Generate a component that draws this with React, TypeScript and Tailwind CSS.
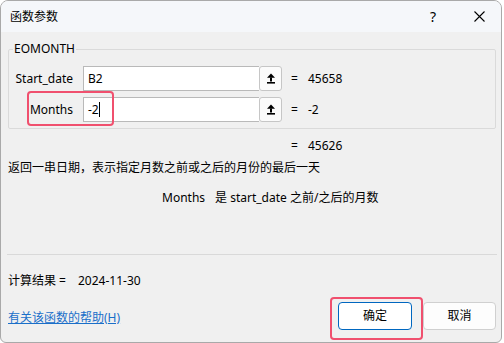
import React from "react";

function UpIcon() {
  return (
    <svg width="10" height="11" viewBox="0 0 10 11" className="fill-black">
      <path d="M5 0.5 L9 4.8 H1 Z" />
      <rect x="4" y="4.5" width="2" height="4" />
      <rect x="1" y="9" width="8" height="1.6" />
    </svg>
  );
}

function ArgRow({ label, value, result, caret }: { label: string; value: string; result: string; caret?: boolean }) {
  return (
    <div className="flex items-center h-[25px]">
      <div className="w-[64px] text-right">{label}</div>
      <div className="ml-[10px] flex items-center h-[25px] w-[176px] bg-white border border-[#b9b9b9] border-r-0 pl-[4px]">
        <span>{value}</span>
        {caret && <span className="w-px h-[15px] bg-black" />}
      </div>
      <button className="w-[23px] h-[25px] flex items-center justify-center bg-[#fbfbfb] border border-[#c6c6c6] rounded-[3px]">
        <UpIcon />
      </button>
      <span className="ml-[9px] w-[17px]">=</span>
      <span>{result}</span>
    </div>
  );
}

export default function App() {
  return (
    <div className="w-[504px] h-[343px] bg-white text-[12px] leading-[16px] text-black font-['Noto_Sans','Noto_Sans_CJK_SC',sans-serif]">
      <div className="relative w-[502px] h-[343px] flex flex-col bg-[#f0f0f0] border border-[#a9a9a9] rounded-t-[8px] rounded-b-[6px] overflow-hidden">
        {/* title bar */}
        <div className="h-[31px] shrink-0 flex items-center bg-[#f5f7fa] pl-[9px]">
          <span className="flex-1">函数参数</span>
          <span className="text-[14px] mr-[38px]">?</span>
          <svg width="11" height="11" viewBox="0 0 11 11" className="mr-[16px] stroke-black" strokeWidth="1.1">
            <path d="M0.5 0.5 L10.5 10.5 M10.5 0.5 L0.5 10.5" />
          </svg>
        </div>

        <div className="flex-1 flex flex-col pl-[7px] pr-[5px] pt-[9px]">
          <fieldset className="border border-[#dadada] rounded-[2px] pb-[6px]">
            <legend className="ml-[4px] px-[1px]">EOMONTH</legend>
            <div className="mt-[9px] flex flex-col gap-[6px]">
              <ArgRow label="Start_date" value="B2" result="45658" />
              <ArgRow label="Months" value="-2" result="-2" caret />
            </div>
          </fieldset>

          <div className="mt-[9px] pl-[283px] flex">
            <span className="w-[17px]">=</span>
            <span>45626</span>
          </div>
          <div className="mt-[6px]">返回一串日期，表示指定月数之前或之后的月份的最后一天</div>
          <div className="mt-[14px] pl-[154px]">
            Months<span className="ml-[10px]">是 start_date 之前/之后的月数</span>
          </div>

          <div className="mt-[48px] -ml-px w-[490px] h-px bg-[#d9d9d9]" />

          <div className="mt-[18px]">
            计算结果 =<span className="ml-[12px]">2024-11-30</span>
          </div>

          <div className="mt-[13px] flex items-center">
            <a className="flex-1 mt-[3px] text-[#1a6fc9] underline">有关该函数的帮助(H)</a>
            <button className="w-[74px] h-[28px] bg-white border border-[#0067c0] rounded-[4px]">确定</button>
            <button className="ml-[11px] w-[73px] h-[28px] bg-[#fdfdfd] border border-[#d0d0d0] rounded-[4px]">取消</button>
          </div>
        </div>

        {/* annotation highlights */}
        <div className="absolute left-[26px] top-[90px] w-[87px] h-[35px] border-2 border-[#f0506e] rounded-[4px]" />
        <div className="absolute left-[329px] top-[296px] w-[93px] h-[43px] border-2 border-[#f0506e] rounded-[4px]" />
      </div>
    </div>
  );
}
